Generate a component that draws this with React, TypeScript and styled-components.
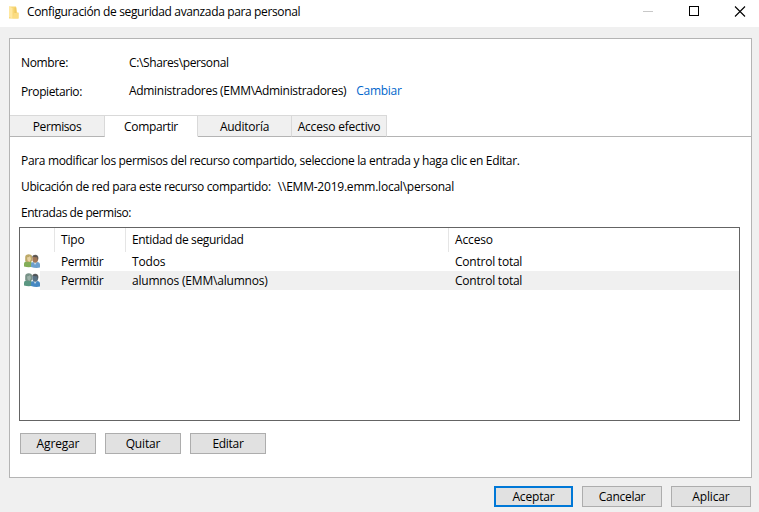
import React from "react";
import styled, { createGlobalStyle } from "styled-components";

const GlobalStyle = createGlobalStyle`
  * { box-sizing: border-box; }
  body { margin: 0; background: #f0f0f0; overflow: hidden; }
`;

const Window = styled.div`
  display: flex;
  flex-direction: column;
  width: 759px;
  height: 512px;
  background: #f0f0f0;
  color: #000;
  font: 12px/16px "Open Sans", "Noto Sans", sans-serif;
`;

const Text = styled.span<{ $track?: number }>`
  white-space: pre;
  letter-spacing: ${(p) => p.$track ?? -0.15}px;
`;

const TitleBar = styled.header`
  display: flex;
  align-items: center;
  height: 27px;
  padding: 0 13px 3px 8px;
  background: #fff;
`;

const Title = styled.h1`
  flex: 1;
  margin: 0 0 0 6px;
  font-size: 12px;
  font-weight: 400;
`;

const Controls = styled.div`
  display: flex;
  gap: 34px;
`;

const Panel = styled.main`
  width: 743px;
  height: 440px;
  margin: 11px 0 0 9px;
  border: 1px solid #b4b4b4;
  background: #fff;
`;

const Info = styled.dl`
  display: grid;
  grid-template-columns: 108px 1fr;
  grid-template-rows: 28px 28px;
  height: 76px;
  margin: 0;
  padding: 16px 0 0 11px;
`;

const Term = styled.dt<{ $drop?: number }>`
  padding-top: ${(p) => p.$drop ?? 0}px;
`;

const Value = styled.dd`
  display: flex;
  gap: 10px;
  margin: 0;
`;

const Link = styled.a`
  color: #0066cc;
`;

const Tabs = styled.nav`
  display: flex;
  height: 22px;
`;

const Tab = styled.div<{ $width: number; $active?: boolean }>`
  width: ${(p) => p.$width}px;
  height: 22px;
  padding-top: 3px;
  text-align: center;
  background: ${(p) => (p.$active ? "#fff" : "#f0f0f0")};
  border-top: 1px solid #d9d9d9;
  border-right: 1px solid #d9d9d9;
  border-bottom: 1px solid ${(p) => (p.$active ? "#fff" : "#b4b4b4")};
`;

const TabRule = styled.div`
  flex: 1;
  border-bottom: 1px solid #b4b4b4;
`;

const Body = styled.section`
  padding: 16px 11px 0 9px;
`;

const Line = styled.p`
  display: flex;
  gap: 7px;
  margin: 0 0 10px;
  padding-left: 2px;
  height: 16px;
`;

const Table = styled.div`
  width: 721px;
  height: 194px;
  margin-top: -4px;
  border: 1px solid #646464;
`;

const Row = styled.div<{ $header?: boolean; $selected?: boolean }>`
  display: grid;
  grid-template-columns: 20px 15px 71px 323px 1fr;
  height: ${(p) => (p.$header ? 24 : 19)}px;
  background: ${(p) =>
    p.$selected ? "linear-gradient(to right, #fff 20px, #f0f0f0 20px)" : "#fff"};
`;

const Cell = styled.div<{ $divided?: boolean; $top?: number }>`
  padding: ${(p) => p.$top ?? 2}px 0 0 6px;
  border-right: 1px solid ${(p) => (p.$divided ? "#e5e5e5" : "transparent")};
`;

const IconCell = styled.div`
  display: flex;
  padding: 2px 0 0 4px;
`;

const Actions = styled.div`
  display: flex;
  gap: 9px;
  padding: 12px 0 0 1px;
`;

const Footer = styled.footer`
  display: flex;
  justify-content: flex-end;
  gap: 9px;
  padding: 8px 8px 0 0;
`;

const Button = styled.button<{ $width: number; $primary?: boolean }>`
  width: ${(p) => p.$width}px;
  height: 21px;
  padding: 0;
  border: ${(p) => (p.$primary ? "2px solid #0078d7" : "1px solid #adadad")};
  background: #e1e1e1;
  color: #000;
  font: inherit;
  line-height: 16px;
  text-align: center;
`;

const FolderIcon = () => (
  <svg width="13" height="14" viewBox="0 0 13 14">
    <path d="M1 1.500h7l1 6h1.500v6H1z" fill="#f8d775" />
    <path d="M6.500 2.500h1.800v6H6.500z" fill="#efc964" />
    <path d="M1 1.500l3.500 1.500v10.500L1 12z" fill="#ffe8a0" />
    <path d="M6 8h4.500v5.500H4.500z" fill="#fbdc82" />
  </svg>
);

const UsersIcon = ({ hair, face, shirt, face2, shirt2 }: Record<string, string>) => (
  <svg width="16" height="16" viewBox="0 0 16 16">
    <path d="M0 12.500V10q0-2.500 3-3h4l2 5.500q-4 1.500-9 0z" fill={shirt} />
    <path d="M1.200 7V3Q1.500 .2 4.700 .2T8.200 3v4L6 8H3z" fill={hair} />
    <path d="M3 3.500Q5.500 3 6 2l1 3-1.500 3L3.500 6.500z" fill={face} />
    <path d="M7 13V10q0-2 3-2h3q3 0 3 3v2.500q-4 1-9-.5z" fill={shirt2} />
    <path d="M9.500 8l1.500 3 2-3z" fill="#c7dae9" />
    <ellipse cx="11.200" cy="5" rx="2.900" ry="3.700" fill={face2} />
    <path d="M8 4Q8 1 11 .7T14.500 4l-.6 2.500-.8-3.300Q10 3.500 9 2.800z" fill="#4b4b4b" opacity=".8" />
  </svg>
);

const entries = [
  {
    who: "Todos",
    track: -0.15,
    selected: false,
    colors: { hair: "#bda968", face: "#e8d3a5", shirt: "#83ad57", face2: "#a27858", shirt2: "#6c9fcd" },
  },
  {
    who: "alumnos (EMM\\alumnos)",
    track: -0.2,
    selected: true,
    colors: { hair: "#789288", face: "#9eb3aa", shirt: "#5b9782", face2: "#597386", shirt2: "#4688c2" },
  },
];

export default function App() {
  return (
    <>
      <GlobalStyle />
      <Window>
        <TitleBar>
          <FolderIcon />
          <Title><Text $track={-0.36}>Configuración de seguridad avanzada para personal</Text></Title>
          <Controls>
            <svg width="12" height="12" shapeRendering="crispEdges"><path d="M1 5.500h10" stroke="#c8c8c8" /></svg>
            <svg width="12" height="12" shapeRendering="crispEdges"><path d="M1.500 1.500h9v9h-9z" transform="translate(0 -1)" fill="none" stroke="#000" /></svg>
            <svg width="12" height="12"><path d="M1 0.500l10 10M11 0.500L1 10.500" stroke="#000" strokeWidth="1.100" /></svg>
          </Controls>
        </TitleBar>
        <Panel>
          <Info>
            <Term><Text $track={-0.35}>Nombre:</Text></Term>
            <Value><Text $track={-0.38}>C:\Shares\personal</Text></Value>
            <Term $drop={1}><Text $track={-0.4}>Propietario:</Text></Term>
            <Value>
              <Text $track={-0.31}>Administradores (EMM\Administradores)</Text>
              <Link><Text $track={-0.28}>Cambiar</Text></Link>
            </Value>
          </Info>
          <Tabs>
            <Tab $width={95}><Text $track={-0.4}>Permisos</Text></Tab>
            <Tab $width={93} $active><Text $track={-0.35}>Compartir</Text></Tab>
            <Tab $width={94}><Text $track={-0.25}>Auditoría</Text></Tab>
            <Tab $width={95}><Text $track={-0.2}>Acceso efectivo</Text></Tab>
            <TabRule />
          </Tabs>
          <Body>
            <Line><Text $track={-0.33}>Para modificar los permisos del recurso compartido, seleccione la entrada y haga clic en Editar.</Text></Line>
            <Line>
              <Text $track={-0.36}>Ubicación de red para este recurso compartido:</Text>
              <Text $track={-0.22}>{"\\\\EMM-2019.emm.local\\personal"}</Text>
            </Line>
            <Line><Text $track={-0.46}>Entradas de permiso:</Text></Line>
            <Table>
              <Row $header>
                <div />
                <Cell $divided />
                <Cell $divided $top={4}><Text>Tipo</Text></Cell>
                <Cell $divided $top={4}><Text $track={-0.36}>Entidad de seguridad</Text></Cell>
                <Cell $top={4}><Text>Acceso</Text></Cell>
              </Row>
              {entries.map((e) => (
                <Row key={e.who} $selected={e.selected}>
                  <IconCell><UsersIcon {...e.colors} /></IconCell>
                  <div />
                  <Cell><Text $track={-0.38}>Permitir</Text></Cell>
                  <Cell><Text $track={e.track}>{e.who}</Text></Cell>
                  <Cell><Text $track={-0.23}>Control total</Text></Cell>
                </Row>
              ))}
            </Table>
            <Actions>
              <Button $width={76}><Text>Agregar</Text></Button>
              <Button $width={76}><Text>Quitar</Text></Button>
              <Button $width={76}><Text $track={-0.3}>Editar</Text></Button>
            </Actions>
          </Body>
        </Panel>
        <Footer>
          <Button $width={79} $primary><Text>Aceptar</Text></Button>
          <Button $width={80}><Text $track={-0.3}>Cancelar</Text></Button>
          <Button $width={80}><Text>Aplicar</Text></Button>
        </Footer>
      </Window>
    </>
  );
}
